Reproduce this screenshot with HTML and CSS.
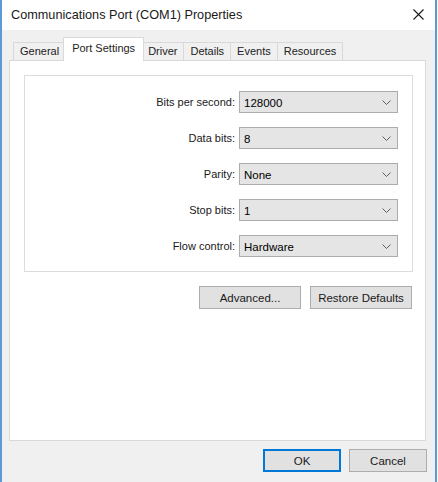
FILE: index.html
```html
<!DOCTYPE html>
<html>
<head>
<meta charset="utf-8">
<link rel="stylesheet" href="styles.css">
</head>
<body>
<div class="window">
  <div class="titlebar">
    <span class="title">Communications Port (COM1) Properties</span>
    <svg class="close" width="11" height="11" viewBox="0 0 11 11"><path d="M0.5 0.5L10.5 10.5M10.5 0.5L0.5 10.5" stroke="#1a1a1a" stroke-width="1.1" fill="none"/></svg>
  </div>
  <div class="body">
    <div class="tabs">
      <div class="tab">General</div>
      <div class="tab active">Port Settings</div>
      <div class="tab">Driver</div>
      <div class="tab">Details</div>
      <div class="tab">Events</div>
      <div class="tab">Resources</div>
    </div>
    <div class="panel">
      <div class="group">
        <div class="row"><span class="label">Bits per second:</span><div class="combo"><span>128000</span><svg class="chev" width="9" height="5" viewBox="0 0 9 5"><path d="M0.5 0.5L4.5 4.5L8.5 0.5" stroke="#606060" fill="none"/></svg></div></div>
        <div class="row"><span class="label">Data bits:</span><div class="combo"><span>8</span><svg class="chev" width="9" height="5" viewBox="0 0 9 5"><path d="M0.5 0.5L4.5 4.5L8.5 0.5" stroke="#606060" fill="none"/></svg></div></div>
        <div class="row"><span class="label">Parity:</span><div class="combo"><span>None</span><svg class="chev" width="9" height="5" viewBox="0 0 9 5"><path d="M0.5 0.5L4.5 4.5L8.5 0.5" stroke="#606060" fill="none"/></svg></div></div>
        <div class="row"><span class="label">Stop bits:</span><div class="combo"><span>1</span><svg class="chev" width="9" height="5" viewBox="0 0 9 5"><path d="M0.5 0.5L4.5 4.5L8.5 0.5" stroke="#606060" fill="none"/></svg></div></div>
        <div class="row"><span class="label">Flow control:</span><div class="combo"><span>Hardware</span><svg class="chev" width="9" height="5" viewBox="0 0 9 5"><path d="M0.5 0.5L4.5 4.5L8.5 0.5" stroke="#606060" fill="none"/></svg></div></div>
      </div>
      <div class="panel-buttons">
        <button class="btn wide">Advanced...</button>
        <button class="btn wide">Restore Defaults</button>
      </div>
    </div>
    <div class="dialog-buttons">
      <button class="btn ok">OK</button>
      <button class="btn">Cancel</button>
    </div>
  </div>
</div>
</body>
</html>
```
FILE: styles.css
```css
html, body {
  margin: 0;
  padding: 0;
  background: #ffffff;
}
body {
  width: 438px;
  height: 482px;
  overflow: hidden;
  font-family: "Liberation Sans", Arial, sans-serif;
  font-size: 11px;
  color: #000;
}
.window {
  width: 433px;
  height: 482px;
  border-left: 2px solid #5b9bd5;
  border-right: 2px solid #5b9bd5;
  display: flex;
  flex-direction: column;
}
.titlebar {
  height: 30px;
  background: #ffffff;
  display: flex;
  align-items: center;
  position: relative;
  padding-left: 9px;
}
.title {
  font-size: 12.7px;
  color: #1a1a1a;
  margin-top: -1px;
}
.close {
  position: absolute;
  left: 411px;
  top: 9px;
}
.body {
  flex: 1;
  background: #f0f0f0;
  padding: 8px 0 0 7px;
  display: flex;
  flex-direction: column;
}
.tabs {
  display: flex;
  align-items: flex-end;
  height: 22px;
  padding-left: 4px;
}
.tab {
  height: 17px;
  line-height: 17px;
  padding: 0 6px;
  border: 1px solid #d9d9d9;
  border-bottom: none;
  margin-right: -1px;
  background: #f0f0f0;
  color: #222;
}
.tab.active {
  height: 23px;
  line-height: 20px;
  padding: 0 8px;
  margin: 0 -3px -1px -2px;
  background: #ffffff;
  position: relative;
  z-index: 1;
  border-color: #d9d9d9;
}
.panel {
  width: 417px;
  height: 381px;
  background: #ffffff;
  border: 1px solid #d9d9d9;
  display: flex;
  flex-direction: column;
  padding: 14px 12px 0 14px;
  box-sizing: border-box;
}
.group {
  border: 1px solid #dcdcdc;
  padding: 15px 14px 14px 0;
  display: flex;
  flex-direction: column;
  gap: 14px;
}
.row {
  display: flex;
  align-items: center;
  justify-content: flex-end;
  gap: 4px;
}
.label {
  color: #1a1a1a;
}
.combo {
  width: 159px;
  height: 22px;
  box-sizing: border-box;
  background: #e5e5e5;
  border: 1px solid #acacac;
  display: flex;
  align-items: center;
  justify-content: space-between;
  padding: 0 6px 0 4px;
  font-size: 11.5px;
}
.combo span {
  margin-top: 1px;
}
.panel-buttons {
  display: flex;
  justify-content: flex-end;
  gap: 9px;
  margin-top: 14px;
  padding-right: 1px;
}
.btn {
  font-family: "Liberation Sans", Arial, sans-serif;
  font-size: 11.5px;
  color: #1a1a1a;
  background: #e1e1e1;
  border: 1px solid #adadad;
  height: 23px;
  width: 78px;
  padding: 0;
  margin: 0;
  box-sizing: border-box;
}
.btn.wide {
  width: 102px;
}
.btn.ok {
  border: 2px solid #0078d7;
}
.dialog-buttons {
  display: flex;
  justify-content: flex-end;
  gap: 8px;
  margin-top: 8px;
  padding-right: 8px;
}
```
